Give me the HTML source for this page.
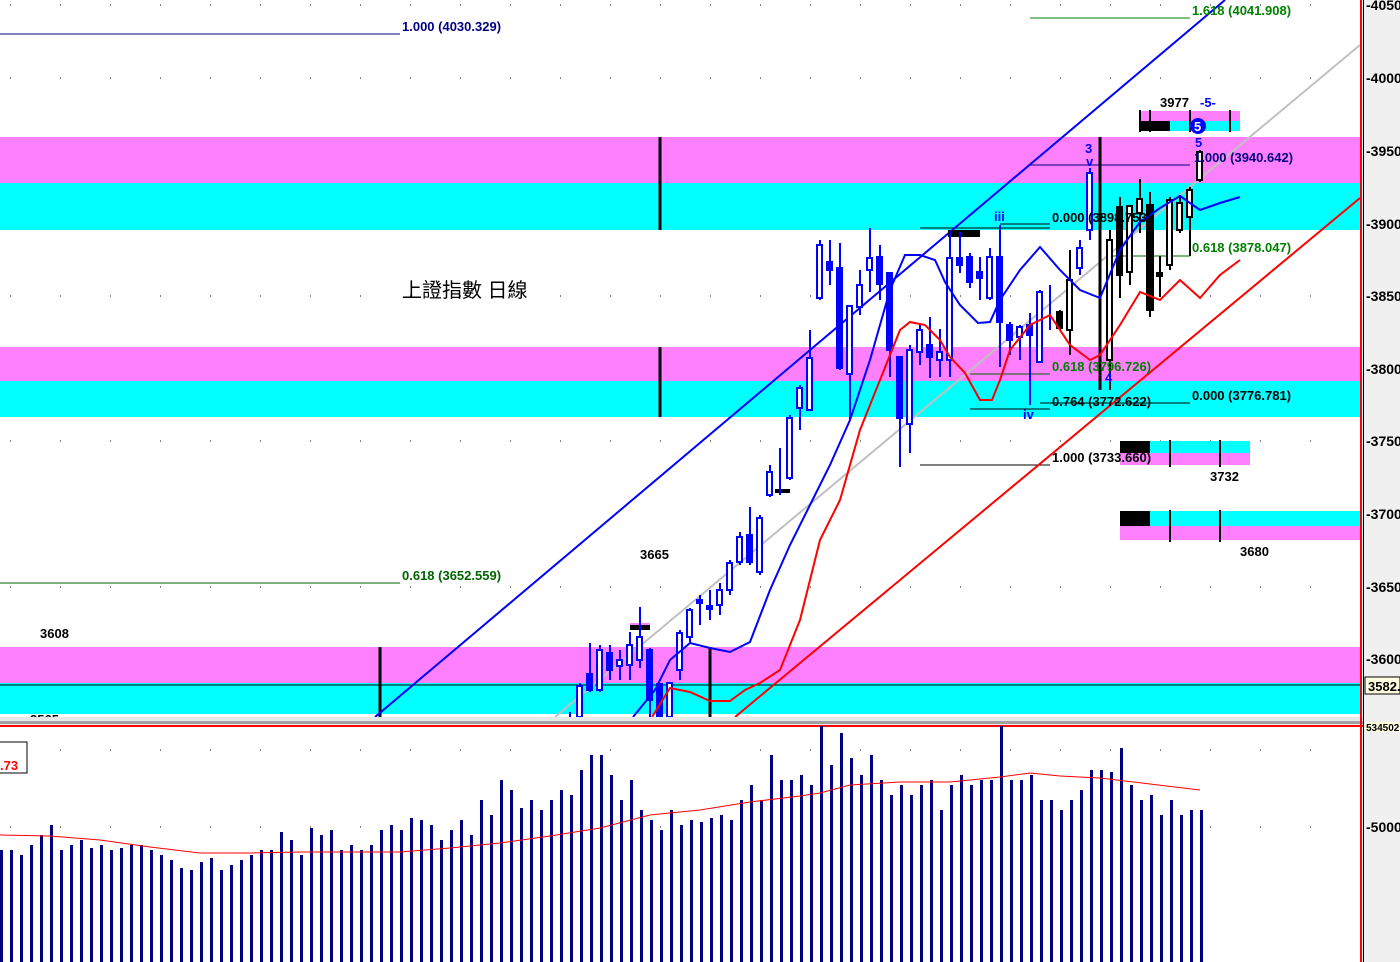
<!DOCTYPE html>
<html><head><meta charset="utf-8"><style>
html,body{margin:0;padding:0;background:#fff}
svg{display:block}
text{font-family:"Liberation Sans","Noto Sans CJK TC",sans-serif;font-size:13px;font-weight:bold}
</style></head><body>
<svg width="1400" height="962" viewBox="0 0 1400 962" xmlns="http://www.w3.org/2000/svg">
<rect x="0" y="0" width="1400" height="962" fill="#fff"/>
<rect x="0" y="137" width="1361" height="46" fill="#ff80ff"/>
<rect x="0" y="183" width="1361" height="47" fill="#00ffff"/>
<rect x="0" y="347" width="1361" height="34" fill="#ff80ff"/>
<rect x="0" y="381" width="1361" height="36" fill="#00ffff"/>
<rect x="0" y="647" width="1361" height="36" fill="#ff80ff"/>
<rect x="0" y="683" width="1361" height="31" fill="#00ffff"/>
<line x1="0" y1="685" x2="1361" y2="685" stroke="#000" stroke-width="1"/>
<g stroke="#000" stroke-width="1" stroke-dasharray="1,49">
<line x1="10" y1="78" x2="1360" y2="78"/><line x1="10" y1="296" x2="1360" y2="296"/>
<line x1="10" y1="441" x2="1360" y2="441"/><line x1="10" y1="587" x2="1360" y2="587"/>
<line x1="10" y1="5" x2="1360" y2="5"/><line x1="10" y1="827" x2="1360" y2="827"/>
<line x1="10" y1="750" x2="1360" y2="750"/>
</g>
<g stroke="#000" stroke-width="3">
<line x1="660" y1="137" x2="660" y2="230"/><line x1="660" y1="347" x2="660" y2="417"/>
<line x1="380" y1="647" x2="380" y2="717"/><line x1="710" y1="647" x2="710" y2="717"/>
</g>
<g stroke-width="1">
<line x1="0" y1="34" x2="400" y2="34" stroke="#000080"/>
<line x1="0" y1="583" x2="400" y2="583" stroke="#006400"/>
<line x1="1030" y1="18" x2="1190" y2="18" stroke="#008000"/>
<line x1="1030" y1="165" x2="1190" y2="165" stroke="#000080"/>
<line x1="920" y1="228" x2="1050" y2="228" stroke="#000"/>
<line x1="1000" y1="224" x2="1050" y2="224" stroke="#000"/>
<line x1="1110" y1="256" x2="1190" y2="256" stroke="#006400"/>
<line x1="970" y1="374" x2="1050" y2="374" stroke="#006400"/>
<line x1="970" y1="409" x2="1050" y2="409" stroke="#000"/>
<line x1="1040" y1="403" x2="1190" y2="403" stroke="#000"/>
<line x1="920" y1="465" x2="1050" y2="465" stroke="#000"/>
</g>
<line x1="555" y1="717" x2="1360" y2="45" stroke="#c0c0c0" stroke-width="2"/>
<line x1="375" y1="717" x2="1225" y2="0" stroke="#0000ff" stroke-width="2"/>
<line x1="735" y1="717" x2="1360" y2="198" stroke="#ff0000" stroke-width="2"/>
<rect x="1140" y="111" width="100" height="10" fill="#ff80ff"/><rect x="1140" y="121" width="100" height="10" fill="#00ffff"/><rect x="1140" y="121" width="30" height="10" fill="#000"/>
<g stroke="#000" stroke-width="2"><line x1="1140" y1="110" x2="1140" y2="132"/><line x1="1150" y1="110" x2="1150" y2="132"/><line x1="1190" y1="110" x2="1190" y2="132"/><line x1="1230" y1="110" x2="1230" y2="132"/></g>
<rect x="1120" y="441" width="130" height="12" fill="#00ffff"/><rect x="1120" y="453" width="130" height="12" fill="#ff80ff"/><rect x="1120" y="441" width="30" height="12" fill="#000"/>
<g stroke="#000" stroke-width="2"><line x1="1170" y1="440" x2="1170" y2="467"/><line x1="1220" y1="440" x2="1220" y2="467"/></g>
<rect x="1120" y="511" width="241" height="15" fill="#00ffff"/><rect x="1120" y="526" width="241" height="14" fill="#ff80ff"/><rect x="1120" y="511" width="30" height="15" fill="#000"/>
<g stroke="#000" stroke-width="2"><line x1="1170" y1="510" x2="1170" y2="542"/><line x1="1220" y1="510" x2="1220" y2="542"/></g>
<rect x="630" y="625" width="20" height="5" fill="#000"/><rect x="630" y="623" width="20" height="2" fill="#ff80ff"/>
<rect x="775" y="489" width="15" height="4" fill="#000"/>
<rect x="948" y="230" width="32" height="7" fill="#000"/>
<g stroke="#0000ff" stroke-width="2" fill="#fff">
<line x1="570" y1="712" x2="570" y2="717"/>
<line x1="580" y1="683" x2="580" y2="717"/><rect x="577" y="686" width="5" height="31"/>
<line x1="590" y1="643" x2="590" y2="692"/><rect x="587" y="674" width="5" height="16" fill="#0000ff"/>
<line x1="600" y1="645" x2="600" y2="692"/><rect x="597" y="650" width="5" height="40"/>
<line x1="610" y1="645" x2="610" y2="680"/><rect x="607" y="653" width="5" height="17" fill="#0000ff"/>
<line x1="620" y1="650" x2="620" y2="680"/><rect x="617" y="660" width="5" height="6"/>
<line x1="630" y1="632" x2="630" y2="680"/><rect x="627" y="645" width="5" height="20"/>
<line x1="640" y1="607" x2="640" y2="668"/><rect x="637" y="637" width="5" height="23"/>
<line x1="650" y1="648" x2="650" y2="717"/><rect x="647" y="650" width="5" height="50" fill="#0000ff"/>
<line x1="660" y1="685" x2="660" y2="717"/><rect x="657" y="684" width="5" height="33" fill="#0000ff"/>
<line x1="670" y1="682" x2="670" y2="717"/><rect x="667" y="683" width="5" height="34"/>
<line x1="680" y1="630" x2="680" y2="680"/><rect x="677" y="633" width="5" height="37"/>
<line x1="690" y1="608" x2="690" y2="642"/><rect x="687" y="610" width="5" height="27"/>
<line x1="700" y1="595" x2="700" y2="625"/><rect x="697" y="600" width="5" height="3" fill="#0000ff"/>
<line x1="710" y1="590" x2="710" y2="620"/><rect x="707" y="606" width="5" height="3" fill="#0000ff"/>
<line x1="720" y1="583" x2="720" y2="615"/><rect x="717" y="590" width="5" height="15"/>
<line x1="730" y1="560" x2="730" y2="595"/><rect x="727" y="563" width="5" height="27"/>
<line x1="740" y1="532" x2="740" y2="565"/><rect x="737" y="537" width="5" height="25"/>
<line x1="750" y1="507" x2="750" y2="565"/><rect x="747" y="535" width="5" height="27" fill="#0000ff"/>
<line x1="760" y1="515" x2="760" y2="575"/><rect x="757" y="518" width="5" height="54"/>
<line x1="770" y1="465" x2="770" y2="497"/><rect x="767" y="472" width="5" height="23"/>
<line x1="780" y1="448" x2="780" y2="495"/>
<line x1="790" y1="415" x2="790" y2="480"/><rect x="787" y="418" width="5" height="60"/>
<line x1="800" y1="385" x2="800" y2="430"/><rect x="797" y="388" width="5" height="20"/>
<line x1="810" y1="330" x2="810" y2="410"/><rect x="807" y="358" width="5" height="52"/>
<line x1="820" y1="240" x2="820" y2="300"/><rect x="817" y="245" width="5" height="53"/>
<line x1="830" y1="240" x2="830" y2="285"/><rect x="827" y="262" width="5" height="8" fill="#0000ff"/>
<line x1="840" y1="243" x2="840" y2="370"/><rect x="837" y="268" width="5" height="100" fill="#0000ff"/>
<line x1="850" y1="305" x2="850" y2="420"/><rect x="847" y="306" width="5" height="68"/>
<line x1="860" y1="270" x2="860" y2="315"/><rect x="857" y="285" width="5" height="22"/>
<line x1="870" y1="228" x2="870" y2="292"/><rect x="867" y="258" width="5" height="12"/>
<line x1="880" y1="245" x2="880" y2="300"/><rect x="877" y="257" width="5" height="27" fill="#0000ff"/>
<line x1="890" y1="272" x2="890" y2="377"/><rect x="887" y="273" width="5" height="77" fill="#0000ff"/>
<line x1="900" y1="357" x2="900" y2="467"/><rect x="897" y="357" width="5" height="61" fill="#0000ff"/>
<line x1="910" y1="345" x2="910" y2="453"/><rect x="907" y="350" width="5" height="74"/>
<line x1="920" y1="324" x2="920" y2="365"/><rect x="917" y="330" width="5" height="22"/>
<line x1="930" y1="317" x2="930" y2="378"/><rect x="927" y="345" width="5" height="12" fill="#0000ff"/>
<line x1="940" y1="329" x2="940" y2="377"/><rect x="937" y="352" width="5" height="8"/>
<line x1="950" y1="230" x2="950" y2="377"/><rect x="947" y="258" width="5" height="102"/>
<line x1="960" y1="232" x2="960" y2="273"/><rect x="957" y="258" width="5" height="7" fill="#0000ff"/>
<line x1="970" y1="253" x2="970" y2="288"/><rect x="967" y="257" width="5" height="25" fill="#0000ff"/>
<line x1="980" y1="257" x2="980" y2="300"/><rect x="977" y="272" width="5" height="6" fill="#0000ff"/>
<line x1="990" y1="248" x2="990" y2="300"/><rect x="987" y="257" width="5" height="41"/>
<line x1="1000" y1="225" x2="1000" y2="367"/><rect x="997" y="257" width="5" height="65" fill="#0000ff"/>
<line x1="1010" y1="322" x2="1010" y2="355"/><rect x="1007" y="325" width="5" height="15" fill="#0000ff"/>
<line x1="1020" y1="325" x2="1020" y2="360"/><rect x="1017" y="327" width="5" height="10"/>
<line x1="1030" y1="313" x2="1030" y2="405"/><rect x="1027" y="325" width="5" height="10" fill="#0000ff"/>
<line x1="1040" y1="290" x2="1040" y2="363"/><rect x="1037" y="292" width="5" height="70"/>
<line x1="1050" y1="285" x2="1050" y2="330"/>
<line x1="1080" y1="240" x2="1080" y2="275"/><rect x="1077" y="248" width="5" height="20"/>
<line x1="1090" y1="168" x2="1090" y2="240"/><rect x="1087" y="173" width="5" height="57"/>
</g>
<g stroke="#000" stroke-width="2" fill="#fff">
<line x1="1060" y1="310" x2="1060" y2="330"/><rect x="1057" y="312" width="5" height="16" fill="#000"/>
<line x1="1070" y1="250" x2="1070" y2="355"/><rect x="1067" y="280" width="5" height="50"/>
<line x1="1100" y1="137" x2="1100" y2="390" stroke-width="3"/>
<line x1="1110" y1="230" x2="1110" y2="390"/><rect x="1107" y="240" width="5" height="120"/>
<line x1="1120" y1="197" x2="1120" y2="298"/><rect x="1117" y="207" width="5" height="68" fill="#000"/>
<line x1="1130" y1="205" x2="1130" y2="285"/><rect x="1127" y="206" width="5" height="66"/>
<line x1="1140" y1="179" x2="1140" y2="233"/><rect x="1137" y="199" width="5" height="14"/>
<line x1="1150" y1="192" x2="1150" y2="317"/><rect x="1147" y="205" width="6" height="105" fill="#000"/>
<line x1="1160" y1="256" x2="1160" y2="297"/><rect x="1157" y="273" width="5" height="3" fill="#000"/>
<line x1="1170" y1="197" x2="1170" y2="270"/><rect x="1167" y="200" width="5" height="65"/>
<line x1="1180" y1="195" x2="1180" y2="233"/><rect x="1177" y="203" width="5" height="27"/>
<line x1="1190" y1="187" x2="1190" y2="256"/><rect x="1187" y="190" width="5" height="27"/>
<line x1="1200" y1="150" x2="1200" y2="182"/><rect x="1197" y="152" width="5" height="28"/>
</g>
<polyline fill="none" stroke="#0000ff" stroke-width="2" points="633,717 655,690 670,660 690,643 710,648 730,652 750,642 770,590 790,545 810,505 830,465 850,420 870,360 890,290 905,255 920,255 935,260 945,282 960,305 978,323 990,322 1000,300 1020,270 1040,247 1060,270 1080,290 1100,298 1120,250 1140,222 1160,208 1180,196 1190,203 1200,210 1220,203 1240,197"/>
<polyline fill="none" stroke="#ff0000" stroke-width="2" points="652,717 670,688 690,692 710,701 730,701 745,690 760,683 780,670 800,620 820,540 840,500 860,430 870,405 880,380 900,330 910,322 925,325 940,340 950,357 965,373 980,400 992,400 1000,380 1010,350 1030,325 1050,315 1070,345 1090,360 1100,355 1120,325 1140,292 1160,300 1180,280 1200,298 1220,275 1240,260"/>
<text x="402" y="31" fill="#000080">1.000 (4030.329)</text>
<text x="402" y="580" fill="#006400">0.618 (3652.559)</text>
<text x="1192" y="15" fill="#008000">1.618 (4041.908)</text>
<text x="1194" y="162" fill="#000080">1.000 (3940.642)</text>
<text x="1052" y="222" fill="#000">0.000 (3898.753)</text>
<text x="1192" y="252" fill="#008000">0.618 (3878.047)</text>
<text x="1052" y="371" fill="#008000">0.618 (3796.726)</text>
<text x="1052" y="406" fill="#000">0.764 (3772.622)</text>
<text x="1192" y="400" fill="#000">0.000 (3776.781)</text>
<text x="1052" y="462" fill="#000">1.000 (3733.660)</text>
<text x="1160" y="107" fill="#000">3977</text>
<text x="1200" y="107" fill="#0000ff" font-weight="normal">-5-</text>
<circle cx="1198" cy="126" r="8" fill="#0000ff"/><text x="1194" y="131" fill="#fff">5</text>
<text x="1195" y="147" fill="#0000ff">5</text>
<text x="1085" y="153" fill="#0000ff">3</text>
<text x="1086" y="166" fill="#0000ff">v</text>
<text x="994" y="221" fill="#0000ff">iii</text>
<text x="1023" y="419" fill="#0000ff">iv</text>
<text x="1105" y="382" fill="#0000ff">4</text>
<text x="640" y="559" fill="#000" font-weight="normal">3665</text>
<text x="40" y="638" fill="#000" font-weight="normal">3608</text>
<text x="1210" y="481" fill="#000" font-weight="normal">3732</text>
<text x="1240" y="556" fill="#000" font-weight="normal">3680</text>
<text x="30" y="724" fill="#000" font-weight="normal">3565</text>
<text x="402" y="297" fill="#000" style="font-size:20px;font-weight:normal">上證指數 日線</text>
<rect x="0" y="717" width="1364" height="8" fill="#e8e8e8"/>
<rect x="0" y="721" width="1364" height="3" fill="#a0a0a0"/>
<rect x="0" y="725" width="1364" height="2" fill="#ff0000"/>
<g fill="#000080">
<rect x="0" y="850" width="3" height="112"/><rect x="10" y="850" width="3" height="112"/><rect x="20" y="855" width="3" height="107"/><rect x="30" y="845" width="3" height="117"/><rect x="40" y="835" width="3" height="127"/><rect x="50" y="825" width="3" height="137"/><rect x="60" y="850" width="3" height="112"/><rect x="70" y="845" width="3" height="117"/><rect x="80" y="840" width="3" height="122"/><rect x="90" y="848" width="3" height="114"/><rect x="100" y="845" width="3" height="117"/><rect x="110" y="850" width="3" height="112"/><rect x="120" y="848" width="3" height="114"/><rect x="130" y="845" width="3" height="117"/><rect x="140" y="845" width="3" height="117"/><rect x="150" y="850" width="3" height="112"/><rect x="160" y="855" width="3" height="107"/><rect x="170" y="860" width="3" height="102"/><rect x="180" y="868" width="3" height="94"/><rect x="190" y="870" width="3" height="92"/><rect x="200" y="862" width="3" height="100"/><rect x="210" y="858" width="3" height="104"/><rect x="220" y="870" width="3" height="92"/><rect x="230" y="865" width="3" height="97"/><rect x="240" y="860" width="3" height="102"/><rect x="250" y="855" width="3" height="107"/><rect x="260" y="850" width="3" height="112"/><rect x="270" y="850" width="3" height="112"/><rect x="280" y="832" width="3" height="130"/><rect x="290" y="840" width="3" height="122"/><rect x="300" y="855" width="3" height="107"/><rect x="310" y="828" width="3" height="134"/><rect x="320" y="835" width="3" height="127"/><rect x="330" y="830" width="3" height="132"/><rect x="340" y="850" width="3" height="112"/><rect x="350" y="845" width="3" height="117"/><rect x="360" y="850" width="3" height="112"/><rect x="370" y="845" width="3" height="117"/>
<rect x="380" y="830" width="3" height="132"/><rect x="390" y="825" width="3" height="137"/><rect x="400" y="830" width="3" height="132"/><rect x="410" y="818" width="3" height="144"/><rect x="420" y="820" width="3" height="142"/><rect x="430" y="825" width="3" height="137"/><rect x="440" y="840" width="3" height="122"/><rect x="450" y="830" width="3" height="132"/><rect x="460" y="820" width="3" height="142"/><rect x="470" y="835" width="3" height="127"/><rect x="480" y="800" width="3" height="162"/><rect x="490" y="815" width="3" height="147"/><rect x="500" y="780" width="3" height="182"/><rect x="510" y="790" width="3" height="172"/><rect x="520" y="808" width="3" height="154"/><rect x="530" y="800" width="3" height="162"/><rect x="540" y="810" width="3" height="152"/><rect x="550" y="800" width="3" height="162"/><rect x="560" y="790" width="3" height="172"/><rect x="570" y="795" width="3" height="167"/><rect x="580" y="770" width="3" height="192"/><rect x="590" y="755" width="3" height="207"/><rect x="600" y="755" width="3" height="207"/><rect x="610" y="775" width="3" height="187"/>
<rect x="620" y="800" width="3" height="162"/><rect x="630" y="780" width="3" height="182"/><rect x="640" y="810" width="3" height="152"/><rect x="650" y="820" width="3" height="142"/><rect x="660" y="830" width="3" height="132"/><rect x="670" y="810" width="3" height="152"/><rect x="680" y="825" width="3" height="137"/><rect x="690" y="820" width="3" height="142"/><rect x="700" y="822" width="3" height="140"/><rect x="710" y="818" width="3" height="144"/><rect x="720" y="815" width="3" height="147"/><rect x="730" y="820" width="3" height="142"/><rect x="740" y="800" width="3" height="162"/><rect x="750" y="785" width="3" height="177"/><rect x="760" y="800" width="3" height="162"/><rect x="770" y="755" width="3" height="207"/><rect x="780" y="780" width="3" height="182"/><rect x="790" y="780" width="3" height="182"/><rect x="800" y="775" width="3" height="187"/><rect x="810" y="785" width="3" height="177"/><rect x="820" y="726" width="3" height="236"/><rect x="830" y="765" width="3" height="197"/><rect x="840" y="733" width="3" height="229"/><rect x="850" y="758" width="3" height="204"/><rect x="860" y="775" width="3" height="187"/><rect x="870" y="755" width="3" height="207"/><rect x="880" y="780" width="3" height="182"/><rect x="890" y="795" width="3" height="167"/><rect x="900" y="785" width="3" height="177"/><rect x="910" y="795" width="3" height="167"/><rect x="920" y="785" width="3" height="177"/><rect x="930" y="780" width="3" height="182"/><rect x="940" y="810" width="3" height="152"/><rect x="950" y="785" width="3" height="177"/><rect x="960" y="775" width="3" height="187"/><rect x="970" y="785" width="3" height="177"/><rect x="980" y="780" width="3" height="182"/><rect x="990" y="780" width="3" height="182"/><rect x="1000" y="726" width="3" height="236"/><rect x="1010" y="780" width="3" height="182"/><rect x="1020" y="780" width="3" height="182"/><rect x="1030" y="775" width="3" height="187"/><rect x="1040" y="800" width="3" height="162"/><rect x="1050" y="800" width="3" height="162"/><rect x="1060" y="810" width="3" height="152"/><rect x="1070" y="800" width="3" height="162"/><rect x="1080" y="790" width="3" height="172"/><rect x="1090" y="770" width="3" height="192"/><rect x="1100" y="770" width="3" height="192"/><rect x="1110" y="772" width="3" height="190"/><rect x="1120" y="748" width="3" height="214"/><rect x="1130" y="785" width="3" height="177"/><rect x="1140" y="800" width="3" height="162"/><rect x="1150" y="795" width="3" height="167"/><rect x="1160" y="815" width="3" height="147"/><rect x="1170" y="800" width="3" height="162"/><rect x="1180" y="815" width="3" height="147"/><rect x="1190" y="810" width="3" height="152"/><rect x="1200" y="810" width="3" height="152"/>
</g>
<polyline fill="none" stroke="#ff0000" stroke-width="1" points="0,835 50,836 100,840 150,847 200,853 250,853 300,852 350,852 400,852 450,848 500,843 550,836 600,828 650,815 700,810 750,802 800,796 820,793 850,785 900,782 950,782 1000,777 1030,773 1060,776 1100,778 1150,784 1200,790"/>
<rect x="-2" y="742" width="29" height="31" fill="#fff" stroke="#000" stroke-width="1"/>
<text x="0" y="770" fill="#ff0000" font-weight="normal">.73</text>
<rect x="1363" y="0" width="37" height="962" fill="#f0f0f0"/>
<line x1="1361" y1="0" x2="1361" y2="962" stroke="#ff0000" stroke-width="2"/>
<line x1="1363.5" y1="0" x2="1363.5" y2="962" stroke="#000" stroke-width="1"/>
<g fill="#000" style="font-size:14px">
<text x="1366" y="10" style="font-size:14px">-4050</text><text x="1366" y="83" style="font-size:14px">-4000</text><text x="1366" y="156" style="font-size:14px">-3950</text><text x="1366" y="229" style="font-size:14px">-3900</text><text x="1366" y="301" style="font-size:14px">-3850</text><text x="1366" y="374" style="font-size:14px">-3800</text><text x="1366" y="446" style="font-size:14px">-3750</text><text x="1366" y="519" style="font-size:14px">-3700</text><text x="1366" y="592" style="font-size:14px">-3650</text><text x="1366" y="664" style="font-size:14px">-3600</text><text x="1366" y="832" style="font-size:14px">-50000</text>
</g>
<rect x="1365" y="677" width="35" height="17" fill="#ffffe0" stroke="#000" stroke-width="1"/>
<text x="1368" y="691" fill="#000">3582.</text>
<rect x="1365" y="722" width="35" height="10" fill="#ffffe0"/>
<text x="1366" y="731" fill="#000" style="font-size:10px">534502</text>
</svg>
</body></html>
